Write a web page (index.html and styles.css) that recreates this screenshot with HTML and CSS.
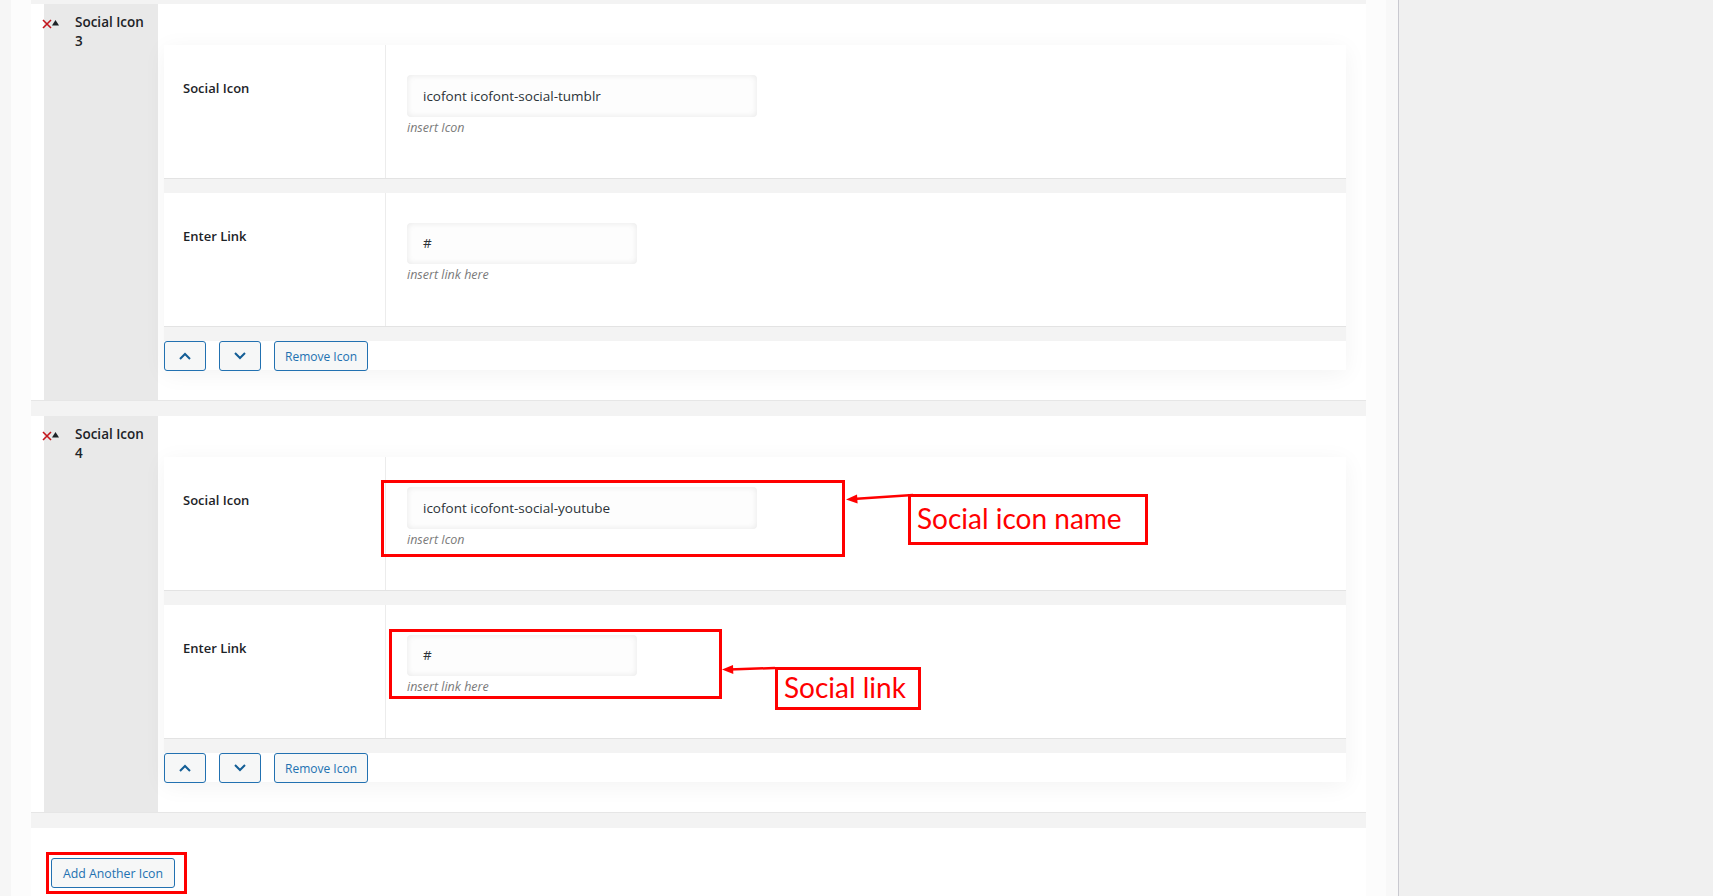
FILE: index.html
```html
<!DOCTYPE html>
<html lang="en">
<head>
<meta charset="utf-8">
<title>Social Icons</title>
<link rel="stylesheet" href="styles.css">
</head>
<body>
<div class="page">
  <div class="edge"></div>
  <main class="main">
    <div class="stack">
      <section class="panel">
        <svg class="handle" width="18" height="10" viewBox="0 0 18 10"><path d="M1 1 L9 9 M9 1 L1 9" stroke="#c4161c" stroke-width="1.6" fill="none"/><path d="M10 6.5 L13.5 1 L17 6.5 Z" fill="#1d2327"/></svg>
        <div class="side"><div class="title">Social Icon 3</div></div>
        <div class="content">
          <div class="fields">
            <div class="card">
              <div class="label">Social Icon</div>
              <div class="field">
                <div class="input wide">icofont icofont-social-tumblr</div>
                <div class="desc">insert Icon</div>
              </div>
            </div>
            <div class="card">
              <div class="label">Enter Link</div>
              <div class="field">
                <div class="input narrow">#</div>
                <div class="desc">insert link here</div>
              </div>
            </div>
            <div class="actions">
              <button class="btn icon"><svg width="12" height="8" viewBox="0 0 12 8"><path d="M1 7 L6 2 L11 7" fill="none" stroke="#135e96" stroke-width="2"/></svg></button>
              <button class="btn icon"><svg width="12" height="8" viewBox="0 0 12 8"><path d="M1 1 L6 6 L11 1" fill="none" stroke="#135e96" stroke-width="2"/></svg></button>
              <button class="btn">Remove Icon</button>
            </div>
          </div>
        </div>
      </section>
      <section class="panel">
        <svg class="handle" width="18" height="10" viewBox="0 0 18 10"><path d="M1 1 L9 9 M9 1 L1 9" stroke="#c4161c" stroke-width="1.6" fill="none"/><path d="M10 6.5 L13.5 1 L17 6.5 Z" fill="#1d2327"/></svg>
        <div class="side"><div class="title">Social Icon 4</div></div>
        <div class="content">
          <div class="fields">
            <div class="card">
              <div class="label">Social Icon</div>
              <div class="field">
                <div class="input wide">icofont icofont-social-youtube</div>
                <div class="desc">insert Icon</div>
              </div>
            </div>
            <div class="card">
              <div class="label">Enter Link</div>
              <div class="field">
                <div class="input narrow">#</div>
                <div class="desc">insert link here</div>
              </div>
            </div>
            <div class="actions">
              <button class="btn icon"><svg width="12" height="8" viewBox="0 0 12 8"><path d="M1 7 L6 2 L11 7" fill="none" stroke="#135e96" stroke-width="2"/></svg></button>
              <button class="btn icon"><svg width="12" height="8" viewBox="0 0 12 8"><path d="M1 1 L6 6 L11 1" fill="none" stroke="#135e96" stroke-width="2"/></svg></button>
              <button class="btn">Remove Icon</button>
            </div>
          </div>
        </div>
      </section>
      <section class="panel add-panel">
        <button class="btn add">Add Another Icon</button>
      </section>
    </div>
  </main>
  <div class="strip"></div>
  <aside class="sidebar"></aside>
</div>

<div class="note box-icon"></div>
<div class="note label-icon">Social icon name</div>
<svg class="arrow arrow-icon" width="70" height="14" viewBox="0 0 70 14"><path d="M68 3 L8 7" stroke="#f00" stroke-width="2.5" fill="none"/><path d="M1 7.5 L12 2.5 L12.6 11.5 Z" fill="#f00"/></svg>
<div class="note box-link"></div>
<div class="note label-link">Social link</div>
<svg class="arrow arrow-link" width="56" height="14" viewBox="0 0 56 14"><path d="M54 6 L8 7.5" stroke="#f00" stroke-width="2.5" fill="none"/><path d="M1 7.6 L12 3 L12.3 12 Z" fill="#f00"/></svg>
<div class="note box-add"></div>
</body>
</html>
```

FILE: styles.css
```css
html, body {
  margin: 0;
  padding: 0;
  height: 896px;
  overflow: hidden;
  background: #f0f0f0;
  font-family: "Open Sans", "Noto Sans", sans-serif;
  color: #1d2327;
}

.page {
  display: flex;
  height: 896px;
}

.edge {
  width: 11px;
  flex: none;
  background: #f6f6f6;
}

.main {
  width: 1335px;
  flex: none;
  padding: 0 20px;
  background: #fcfcfc;
}

.strip {
  width: 12px;
  flex: none;
  background: #f8f8f8;
  border-right: 1px solid #c9c9d0;
}

.sidebar {
  flex: 1;
  background: #f0f0f0;
}

.stack {
  background: #f3f3f3;
  padding-top: 4px;
  height: 892px;
  display: flex;
  flex-direction: column;
  gap: 15px;
}

.panel {
  position: relative;
  display: flex;
  background: #fff;
  padding-left: 13px;
  border-bottom: 1px solid #e6e6e6;
  flex: none;
}

.handle {
  position: absolute;
  left: 11px;
  top: 15px;
  display: block;
}

.side {
  width: 114px;
  flex: none;
  background: #e9e9e9;
  padding: 9px 0 0 31px;
  box-sizing: border-box;
}

.title {
  width: 76px;
  font-size: 13.5px;
  font-weight: 600;
  line-height: 19px;
}

.content {
  flex: 1;
  padding: 41px 20px 30px 6px;
}

.fields {
  background: #f3f3f3;
  display: flex;
  flex-direction: column;
  gap: 14px;
  box-shadow: 0 4px 22px rgba(0, 0, 0, 0.05);
}

.card {
  display: grid;
  grid-template-columns: 222px 1fr;
  height: 134px;
  background: #fff;
  border-bottom: 1px solid #e3e3e3;
  box-sizing: border-box;
}

.label {
  border-right: 1px solid #ececec;
  padding: 34px 0 0 19px;
  font-size: 13px;
  font-weight: 600;
  line-height: 18px;
}

.field {
  padding: 30px 0 0 21px;
}

.input {
  height: 42px;
  box-sizing: border-box;
  border-radius: 4px;
  background: #fdfdfd;
  box-shadow: inset 0 0 6px rgba(0, 0, 0, 0.09);
  padding-left: 16px;
  font-size: 13.5px;
  line-height: 42px;
  color: #2c3338;
}

.input.wide { width: 350px; }
.input.narrow { width: 230px; height: 41px; line-height: 40px; }

.desc {
  margin-top: 2px;
  font-size: 12.5px;
  font-style: italic;
  line-height: 18px;
  color: #7a7a7a;
}

.actions {
  display: flex;
  gap: 13px;
  height: 29px;
  background: #fff;
}

.btn {
  height: 30px;
  box-sizing: border-box;
  border: 1px solid #2271b1;
  border-radius: 3px;
  background: #f6f7f7;
  color: #2271b1;
  font-family: "Open Sans", "Noto Sans", sans-serif;
  font-size: 12px;
  padding: 0 10px;
  margin: 0;
  display: flex;
  align-items: center;
  justify-content: center;
}

.btn.icon {
  width: 42px;
  padding: 0;
}

.btn svg { display: block; }

.add-panel {
  padding: 30px 20px 20px 20px;
  height: 120px;
  border-bottom: none;
}

.btn.add {
  width: 124px;
  height: 30px;
  font-size: 12.3px;
}

.note {
  position: absolute;
  border: 3px solid #ff0000;
  box-sizing: border-box;
}

.box-icon { left: 381px; top: 480px; width: 464px; height: 77px; }
.box-link { left: 389px; top: 629px; width: 333px; height: 70px; }
.box-add { left: 46px; top: 852px; width: 141px; height: 42px; }

.label-icon,
.label-link {
  color: #ff0000;
  font-family: "Lato", "Liberation Sans", sans-serif;
  font-size: 28px;
  line-height: 1;
  display: flex;
  align-items: center;
  padding-left: 6px;
  padding-bottom: 4px;
  background: #fff;
}

.label-icon { left: 908px; top: 494px; width: 240px; height: 51px; }
.label-link { left: 775px; top: 667px; width: 146px; height: 43px; }

.arrow { position: absolute; }
.arrow-icon { left: 845px; top: 492px; }
.arrow-link { left: 721px; top: 662px; }
```
